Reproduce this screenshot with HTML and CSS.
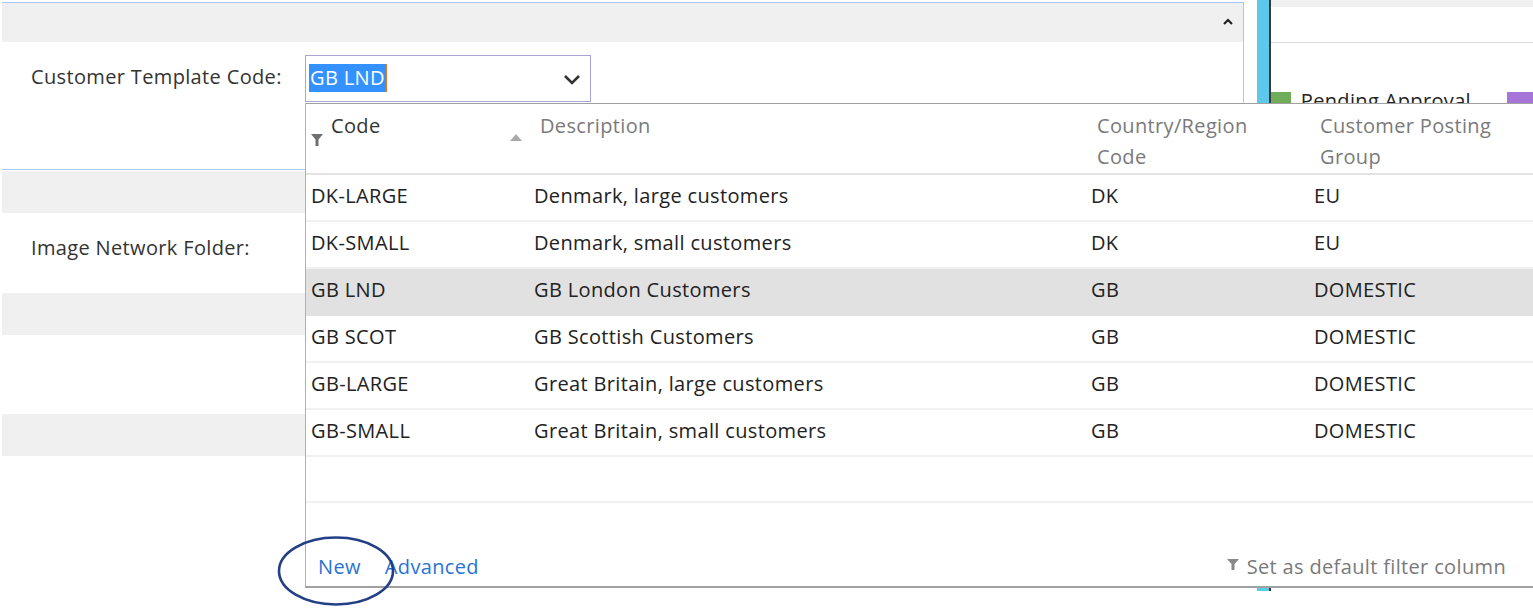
FILE: index.html
```html
<!DOCTYPE html>
<html>
<head>
<meta charset="utf-8">
<link rel="stylesheet" href="styles.css">
</head>
<body>
<div class="page">
  <div class="left">
    <div class="section focused">
      <div class="sec-head">
        <svg class="collapse" width="10" height="7" viewBox="0 0 10 7"><path d="M1 6 L5 2 L9 6" fill="none" stroke="#222" stroke-width="2.2"/></svg>
      </div>
      <div class="sec-body">
        <div class="field">
          <span class="label">Customer Template Code:</span>
          <div class="input">
            <span class="sel">GB LND</span><span class="caret"></span>
            <svg class="chev" width="18" height="12" viewBox="0 0 18 12"><path d="M2 3 L9 10 L16 3" fill="none" stroke="#333" stroke-width="2.6"/></svg>
          </div>
        </div>
      </div>
    </div>
    <div class="section">
      <div class="sec-head"></div>
      <div class="sec-body short">
        <div class="field"><span class="label">Image Network Folder:</span></div>
      </div>
    </div>
    <div class="section">
      <div class="sec-head"></div>
      <div class="sec-body short2"></div>
    </div>
    <div class="section">
      <div class="sec-head"></div>
      <div class="sec-body"></div>
    </div>
  </div>
  <div class="gap"></div>
  <div class="bar"></div>
  <div class="right">
    <div class="r-top"></div>
    <div class="r-head"></div>
    <div class="legend">
      <span class="sw green"></span><span class="leg-text">Pending Approval</span><span class="sw purple"></span>
    </div>
  </div>
</div>

<div class="dropdown">
  <div class="thead">
    <div class="th c1">
      <svg class="funnel" width="12" height="12" viewBox="0 0 12 12"><path d="M0 0 H12 L7.5 5.5 V12 H4.5 V5.5 Z" fill="#6f6f6f"/></svg>
      <span class="th-text dark">Code</span>
      <svg class="sort" width="12" height="7" viewBox="0 0 12 7"><path d="M0 7 L6 0 L12 7 Z" fill="#aaa"/></svg>
    </div>
    <div class="th c2"><span class="th-text">Description</span></div>
    <div class="th c3"><span class="th-text">Country/Region<br>Code</span></div>
    <div class="th c4"><span class="th-text">Customer Posting<br>Group</span></div>
  </div>
  <div class="row"><div class="td c1">DK-LARGE</div><div class="td c2">Denmark, large customers</div><div class="td c3">DK</div><div class="td c4">EU</div></div>
  <div class="row"><div class="td c1">DK-SMALL</div><div class="td c2">Denmark, small customers</div><div class="td c3">DK</div><div class="td c4">EU</div></div>
  <div class="row selected"><div class="td c1">GB LND</div><div class="td c2">GB London Customers</div><div class="td c3">GB</div><div class="td c4">DOMESTIC</div></div>
  <div class="row"><div class="td c1">GB SCOT</div><div class="td c2">GB Scottish Customers</div><div class="td c3">GB</div><div class="td c4">DOMESTIC</div></div>
  <div class="row"><div class="td c1">GB-LARGE</div><div class="td c2">Great Britain, large customers</div><div class="td c3">GB</div><div class="td c4">DOMESTIC</div></div>
  <div class="row"><div class="td c1">GB-SMALL</div><div class="td c2">Great Britain, small customers</div><div class="td c3">GB</div><div class="td c4">DOMESTIC</div></div>
  <div class="row empty"></div>
  <div class="footer">
    <div class="actions"><a class="link new">New</a><a class="link">Advanced</a></div>
    <div class="default-filter">
      <svg width="12" height="11" viewBox="0 0 12 11"><path d="M0 0 H12 L7.5 5 V11 H4.5 V5 Z" fill="#888"/></svg>
      <span>Set as default filter column</span>
    </div>
  </div>
</div>

<svg class="annot" width="124" height="76" viewBox="0 0 124 76"><ellipse cx="62" cy="38" rx="57" ry="33.5" fill="none" stroke="#243f85" stroke-width="2.6"/></svg>
</body>
</html>
```

FILE: styles.css
```css
* { box-sizing: border-box; }
html, body { margin: 0; padding: 0; }
body {
  width: 1533px;
  height: 613px;
  overflow: hidden;
  position: relative;
  background: #fff;
  font-family: "Open Sans", "Noto Sans", sans-serif;
  color: #222;
  font-size: 20px;
  letter-spacing: 0.35px;
}
.page { display: flex; height: 591px; }
.left { width: 1245px; display: flex; flex-direction: column; padding-top: 2px; padding-left: 2px; }
.section { display: flex; flex-direction: column; }
.section.focused { border: 1px solid #a9c8f5; border-left: none; }
.section:not(.focused) { margin-top: 1px; margin-right: 2px; }
.sec-head { height: 42px; background: #f0f0f0; display: flex; justify-content: flex-end; align-items: center; padding-right: 10px; }
.focused .sec-head { height: 39px; }
.collapse { margin-top: -3px; }
.sec-body { height: 127px; padding-top: 13px; }
.sec-body.short { height: 79px; padding-top: 25px; }
.sec-body.short2 { height: 78px; }
.field { display: flex; align-items: center; }
.label { width: 303px; padding-left: 29px; color: #333; margin-top: -4px; }
.input {
  width: 286px; height: 47px;
  border: 1px solid #a7a5d6;
  display: flex; align-items: center;
  padding-left: 3px;
  position: relative;
}
.sel { background: #3392ff; color: #fff; line-height: 28px; padding: 0 1px; margin-top: -2px; }
.caret { width: 1px; height: 28px; background: #e07b22; margin-top: -2px; }
.chev { position: absolute; right: 9px; top: 17px; }

.gap { width: 13px; }
.bar { width: 14px; background: #5ec8ea; border-right: 2px solid #3a3a3a; }
.right { flex: 1; display: flex; flex-direction: column; }
.r-top { height: 7px; background: #f0f0f0; }
.r-head { height: 36px; border-bottom: 1px solid #ddd; }
.legend { display: flex; align-items: flex-start; margin-top: 49px; }
.sw { width: 20px; height: 20px; flex: none; }
.green { background: #70ad5a; }
.purple { background: #a774d8; width: 26px; }
.leg-text { margin-left: 10px; margin-right: 36px; line-height: 18px; color: #222; white-space: nowrap; }

.dropdown {
  position: absolute;
  left: 305px; top: 103px;
  width: 1240px; height: 485px;
  background: #fff;
  border-top: 1px solid #a0a0a0;
  border-left: 1px solid #b0b0b0;
  border-bottom: 2px solid #a0a0a0;
  display: flex; flex-direction: column;
}
.thead { display: flex; height: 71px; border-bottom: 2px solid #e2e2e2; }
.c1 { width: 223px; }
.c2 { width: 557px; }
.c3 { width: 223px; }
.c4 { flex: 1; }
.th { position: relative; padding-left: 11px; padding-top: 6px; }
.th.c1 { padding-left: 25px; }
.th-text { line-height: 31px; color: #7a7a7a; display: block; white-space: nowrap; }
.th-text.dark { color: #333; }
.funnel { position: absolute; left: 5px; top: 30px; }
.sort { position: absolute; left: 204px; top: 30px; }
.row { display: flex; height: 47px; border-bottom: 2px solid #f1f1f1; align-items: center; color: #222; flex: none; }
.row.selected { background: #e1e1e1; border-bottom-color: #e1e1e1; }
.row.empty { height: 46px; }
.td { padding-left: 5px; margin-top: -5px; white-space: nowrap; }
.footer { flex: 1; display: flex; justify-content: space-between; align-items: flex-end; padding-bottom: 6px; width: 1200px; }
.actions { display: flex; gap: 24px; padding-left: 12px; }
.link { color: #2a73d4; }
.default-filter { display: flex; align-items: center; gap: 8px; color: #7a7a7a; white-space: nowrap; }
.default-filter svg { margin-top: -4px; }
.annot { position: absolute; left: 274px; top: 533px; }
```
